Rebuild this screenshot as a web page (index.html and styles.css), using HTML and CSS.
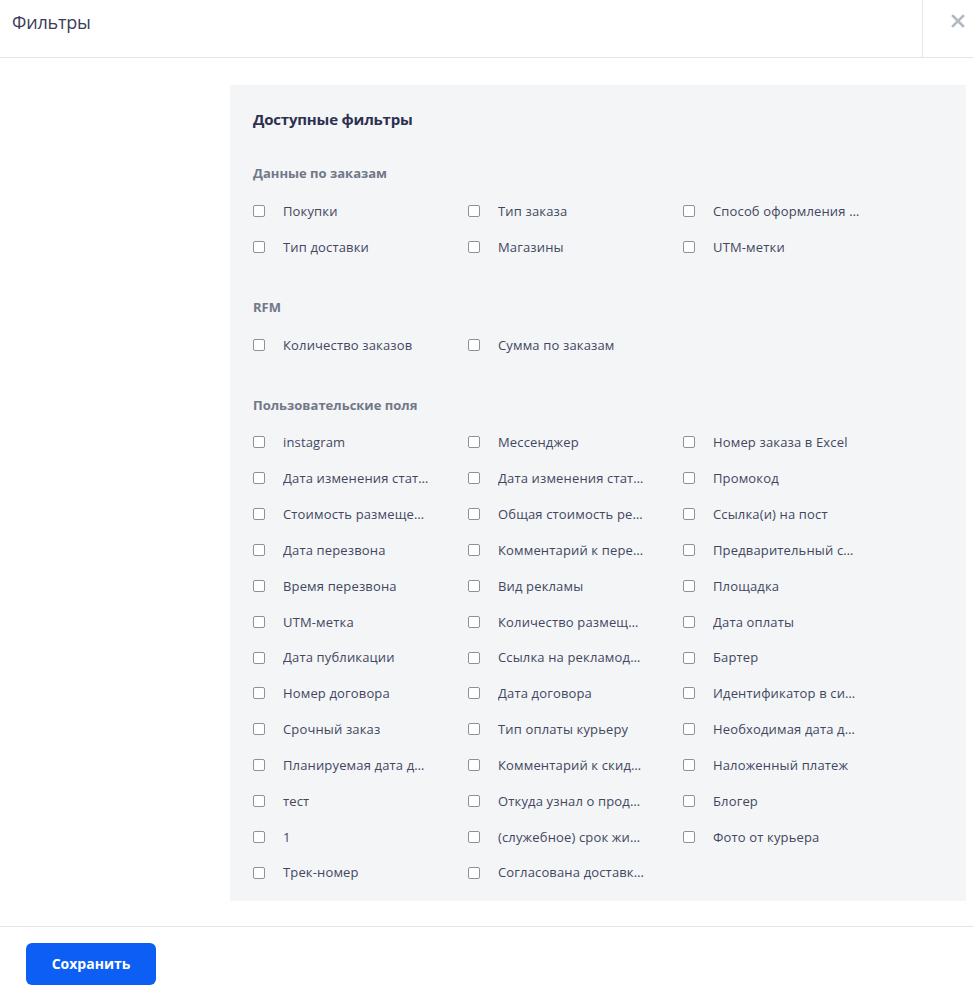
FILE: index.html
```html
<!DOCTYPE html>
<html>
<head>
	<meta charset="utf-8">
	<title>Фильтры</title>
	<link rel="stylesheet" href="styles.css">
</head>
<body>
<div class="modal">
	<div class="modal-head">
		<h1>Фильтры</h1>
		<a class="close" href="javascript:;">
			<svg width="14" height="14" viewBox="0 0 14 14"><path d="M2 2L12 12M12 2L2 12" stroke="#b3b9c1" stroke-width="2.6" stroke-linecap="square"/></svg>
		</a>
	</div>
	<div class="modal-body">
		<div class="panel">
			<h2>Доступные фильтры</h2>

			<div class="group">
				<h4>Данные по заказам</h4>
				<ul class="opts">
					<li><label><input type="checkbox"><span>Покупки</span></label></li>
					<li><label><input type="checkbox"><span>Тип заказа</span></label></li>
					<li><label><input type="checkbox"><span>Способ оформления заказа</span></label></li>
					<li><label><input type="checkbox"><span>Тип доставки</span></label></li>
					<li><label><input type="checkbox"><span>Магазины</span></label></li>
					<li><label><input type="checkbox"><span>UTM-метки</span></label></li>
				</ul>
			</div>

			<div class="group">
				<h4>RFM</h4>
				<ul class="opts">
					<li><label><input type="checkbox"><span>Количество заказов</span></label></li>
					<li><label><input type="checkbox"><span>Сумма по заказам</span></label></li>
				</ul>
			</div>

			<div class="group">
				<h4>Пользовательские поля</h4>
				<ul class="opts">
					<li><label><input type="checkbox"><span>instagram</span></label></li>
					<li><label><input type="checkbox"><span>Мессенджер</span></label></li>
					<li><label><input type="checkbox"><span>Номер заказа в Excel</span></label></li>
					<li><label><input type="checkbox"><span>Дата изменения статуса</span></label></li>
					<li><label><input type="checkbox"><span>Дата изменения статуса оплаты</span></label></li>
					<li><label><input type="checkbox"><span>Промокод</span></label></li>
					<li><label><input type="checkbox"><span>Стоимость размещения</span></label></li>
					<li><label><input type="checkbox"><span>Общая стоимость рекламы</span></label></li>
					<li><label><input type="checkbox"><span>Ссылка(и) на пост</span></label></li>
					<li><label><input type="checkbox"><span>Дата перезвона</span></label></li>
					<li><label><input type="checkbox"><span>Комментарий к перезвону</span></label></li>
					<li><label><input type="checkbox"><span>Предварительный счёт</span></label></li>
					<li><label><input type="checkbox"><span>Время перезвона</span></label></li>
					<li><label><input type="checkbox"><span>Вид рекламы</span></label></li>
					<li><label><input type="checkbox"><span>Площадка</span></label></li>
					<li><label><input type="checkbox"><span>UTM-метка</span></label></li>
					<li><label><input type="checkbox"><span>Количество размещений</span></label></li>
					<li><label><input type="checkbox"><span>Дата оплаты</span></label></li>
					<li><label><input type="checkbox"><span>Дата публикации</span></label></li>
					<li><label><input type="checkbox"><span>Ссылка на рекламодателя</span></label></li>
					<li><label><input type="checkbox"><span>Бартер</span></label></li>
					<li><label><input type="checkbox"><span>Номер договора</span></label></li>
					<li><label><input type="checkbox"><span>Дата договора</span></label></li>
					<li><label><input type="checkbox"><span>Идентификатор в системе</span></label></li>
					<li><label><input type="checkbox"><span>Срочный заказ</span></label></li>
					<li><label><input type="checkbox"><span>Тип оплаты курьеру</span></label></li>
					<li><label><input type="checkbox"><span>Необходимая дата доставки</span></label></li>
					<li><label><input type="checkbox"><span>Планируемая дата доставки</span></label></li>
					<li><label><input type="checkbox"><span>Комментарий к скидке</span></label></li>
					<li><label><input type="checkbox"><span>Наложенный платеж</span></label></li>
					<li><label><input type="checkbox"><span>тест</span></label></li>
					<li><label><input type="checkbox"><span>Откуда узнал о продукте</span></label></li>
					<li><label><input type="checkbox"><span>Блогер</span></label></li>
					<li><label><input type="checkbox"><span>1</span></label></li>
					<li><label><input type="checkbox"><span>(служебное) срок жизни</span></label></li>
					<li><label><input type="checkbox"><span>Фото от курьера</span></label></li>
					<li><label><input type="checkbox"><span>Трек-номер</span></label></li>
					<li><label><input type="checkbox"><span>Согласована доставка с клиентом</span></label></li>
				</ul>
			</div>
		</div>
	</div>
	<div class="modal-foot">
		<button class="btn-save" type="button">Сохранить</button>
	</div>
</div>
</body>
</html>
```

FILE: styles.css
```css
body,h1,h2,h4,ul,li{margin:0;padding:0;}
ul{list-style-type:none;}
body{background:#fff;color:#343a5a;font:13px/1.4 "Open Sans","Noto Sans",Arial,sans-serif;}

.modal{width:974px;}
.modal-head{display:flex;height:57px;border-bottom:1px solid #e3e6ea;}
.modal-head h1{flex:1;font-weight:400;font-size:18px;line-height:44px;padding:0 12px;color:#3a3d58;letter-spacing:-0.2px;}
.close{width:52px;border-left:1px solid #e3e6ea;display:flex;padding:14px 0 0 28px;box-sizing:border-box;}

.modal-body{padding:27px 8px 25px 230px;border-bottom:1px solid #e3e6ea;}
.panel{background:#f4f5f7;padding:24px 23px 10px;}
.panel h2{font-size:15px;line-height:20px;font-weight:700;color:#2d3050;letter-spacing:-0.2px;}
.group{margin-top:35px;}
.group + .group{margin-top:33px;}
.group h4{font-size:13px;line-height:18px;font-weight:700;color:#717887;margin-bottom:11px;}

.opts{display:grid;grid-template-columns:215px 215px 215px;grid-auto-rows:35.85px;}
.opts label{display:flex;align-items:center;height:100%;cursor:pointer;}
.opts input{appearance:none;-webkit-appearance:none;margin:0 18px 0 0;width:12px;height:12px;flex:none;border:1px solid #8e9197;border-radius:2px;background:#fff;box-sizing:border-box;}
.opts span{display:block;max-width:147px;white-space:nowrap;overflow:hidden;text-overflow:ellipsis;font-size:13px;letter-spacing:0.15px;color:#42475f;}

.modal-foot{padding:16px 26px;}
.btn-save{width:130px;height:42px;border:0;border-radius:6px;background:#0d5ef4;color:#fff;font:700 14px "Open Sans","Noto Sans",Arial,sans-serif;cursor:pointer;}
```
